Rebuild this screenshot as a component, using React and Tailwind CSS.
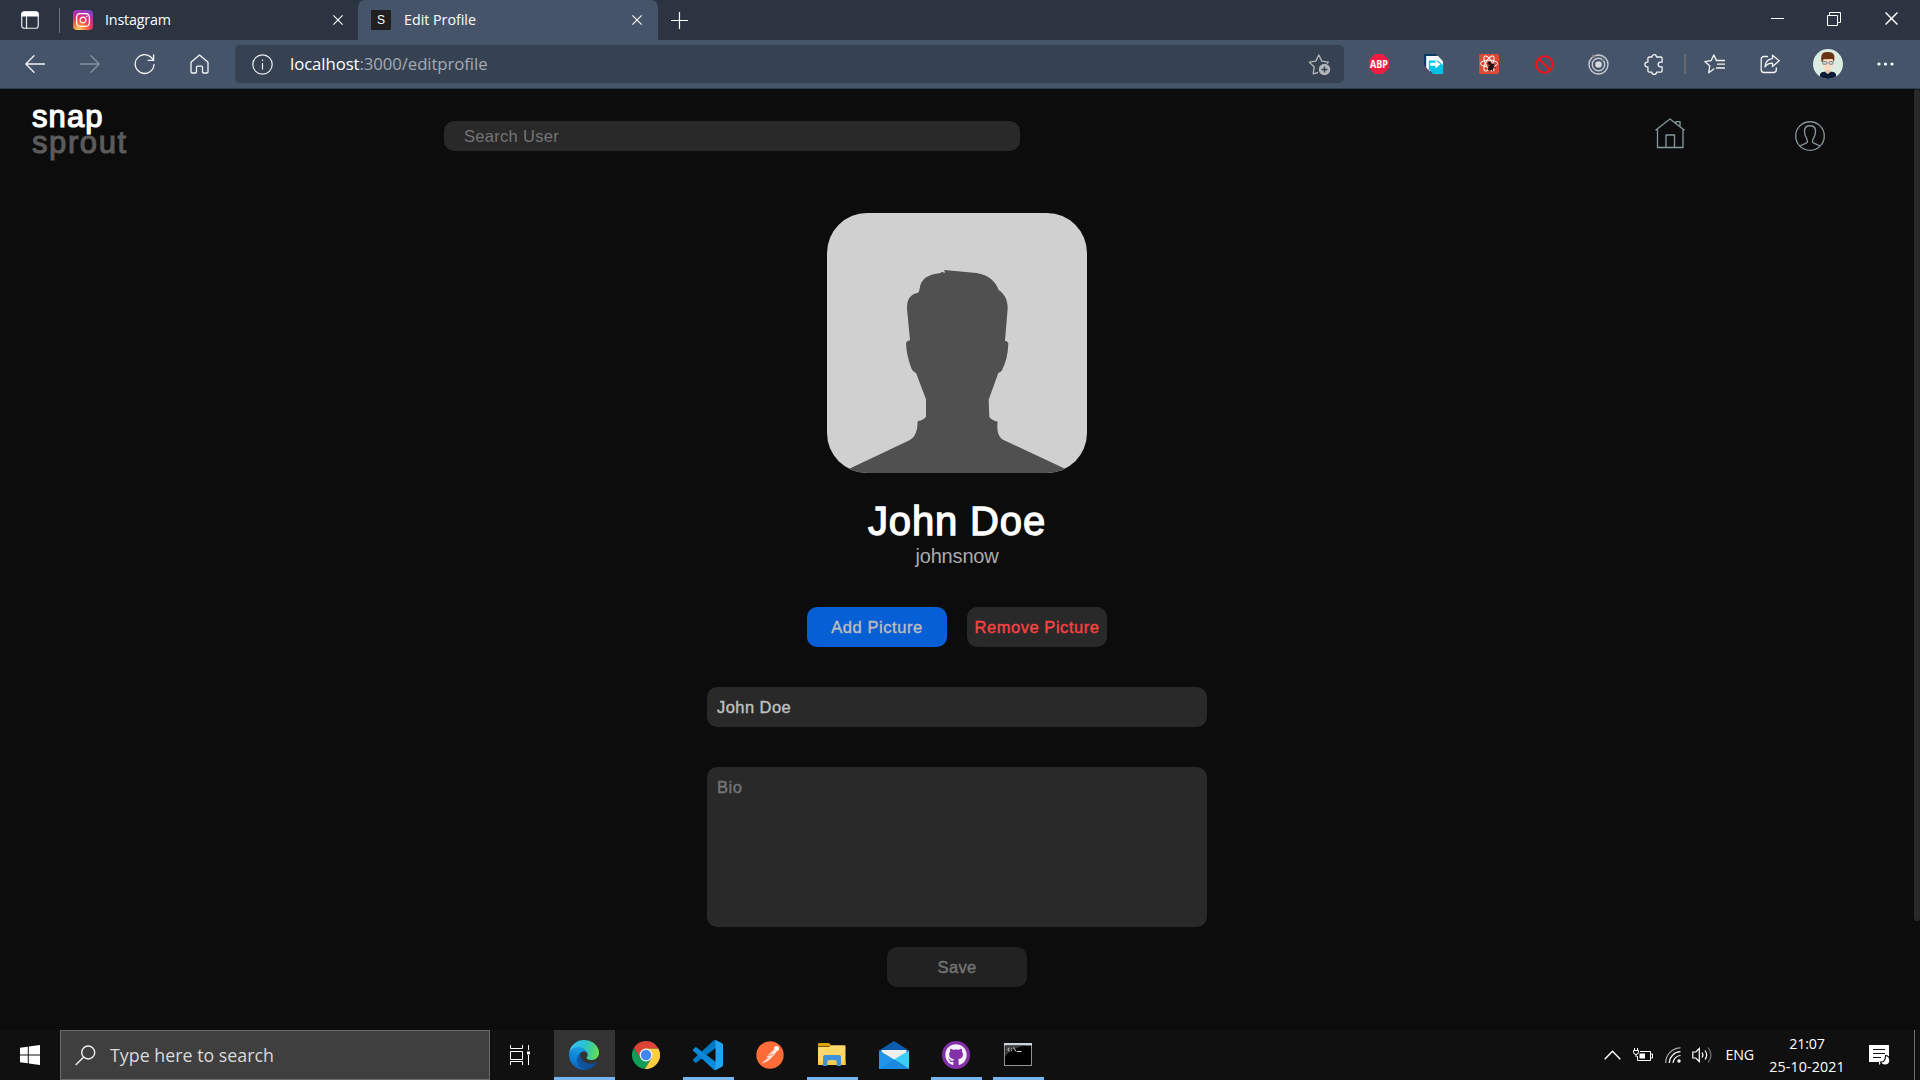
import React from "react";
import { FaInstagram, FaGithub } from "react-icons/fa";

const segoe = "font-['Open_Sans',sans-serif]";
const medium = "[-webkit-text-stroke:0.4px_currentColor]";

function Svg({ w, h, children, className = "", ...rest }) {
  return (
    <svg width={w} height={h} viewBox={`0 0 ${w} ${h}`} fill="none" className={`block shrink-0 ${className}`} {...rest}>
      {children}
    </svg>
  );
}

function CloseIcon({ size = 10 }) {
  return (
    <svg width={size} height={size} viewBox="0 0 10 10" fill="none" stroke="#fff" strokeWidth="1.1" className="block shrink-0">
      <path d="M0.4 0.4 L9.6 9.6 M9.6 0.4 L0.4 9.6" />
    </svg>
  );
}

function TabStrip() {
  return (
    <div className="flex h-10 bg-[#2b3440] text-[14.25px] text-white">
      <div className="flex w-[59px] items-center pl-[21px]">
        <Svg w={18} h={18}>
          <rect x="0.75" y="0.75" width="16.5" height="16.5" rx="2.5" stroke="#e8eaed" strokeWidth="1.2" />
          <path d="M0.5 5.5V3A2.5 2.5 0 0 1 3 .5h12A2.5 2.5 0 0 1 17.5 3v2.5z" fill="#fff" />
          <path d="M5.5 5v12.5" stroke="#e8eaed" strokeWidth="1.2" />
        </Svg>
      </div>
      <div className="mt-2 h-[25px] w-px bg-[#6d747d]" />
      <div className="flex w-[298px] items-center pr-[15px] pl-[13px]">
        <div className="flex size-5 items-center justify-center rounded-[4px] bg-[radial-gradient(circle_at_28%_108%,#fddb6a_5%,#fb7e3c_28%,#f0325a_50%,#b42fb0_74%,#5a4fd0_100%)]">
          <FaInstagram size={16} color="#fff" />
        </div>
        <span className="ml-3 flex-1 tracking-[-0.15px]">Instagram</span>
        <CloseIcon />
      </div>
      <div className="relative flex w-[300px] items-center rounded-t-[7px] bg-[#455469] pr-4 pl-[13px]">
        <div className="flex size-5 items-center justify-center rounded-[1px] bg-[#202020] font-['Liberation_Sans',sans-serif] text-[12px] text-white">S</div>
        <span className="ml-[13px] flex-1">Edit Profile</span>
        <CloseIcon />
      </div>
      <div className="flex flex-1 items-center pl-[13px]">
        <Svg w={17} h={17} stroke="#fff" strokeWidth="1.2">
          <path d="M8.5 0v17M0 8.5h17" />
        </Svg>
      </div>
      <div className="flex h-[37px] w-[172px] items-center">
        <div className="flex w-[57px] justify-center pl-[2px]">
          <div className="h-px w-[13px] bg-white" />
        </div>
        <div className="flex w-[57px] justify-center">
          <Svg w={14} h={14} stroke="#fff" strokeWidth="1">
            <path d="M.5 3.5h10v10h-10zM2.5 3.5v-3h11v10h-3" />
          </Svg>
        </div>
        <div className="flex w-[58px] justify-center">
          <CloseIcon size={13} />
        </div>
      </div>
    </div>
  );
}

function Cell({ children, className = "w-[55px]" }) {
  return <div className={`flex shrink-0 items-center justify-center ${className}`}>{children}</div>;
}

function Toolbar() {
  const line = { stroke: "#f2f4f6", strokeWidth: 1.3, strokeLinejoin: "round", strokeLinecap: "round" };
  return (
    <div className="flex h-[49px] items-center border-b border-[#2f3c4c] bg-[#455469] pl-[7.5px]">
      <Cell>
        <Svg w={20} h={18} {...line}><path d="M19.5 9H.8M9 .7L.8 9 9 17.3" /></Svg>
      </Cell>
      <Cell>
        <Svg w={20} h={18} {...line} stroke="#8893a1"><path d="M.5 9h18.700M11 .7L19.200 9 11 17.300" /></Svg>
      </Cell>
      <Cell>
        <Svg w={21} h={21} {...line} className="-ml-px"><path d="M19.200 6.200A9.400 9.400 0 1 0 20 10.500M19.600 1v5.400h-5.500" /></Svg>
      </Cell>
      <Cell>
        <Svg w={19} h={20} {...line} className="-ml-px">
          <path d="M1 8.300L9.500 1 18 8.300v9.400a1.300 1.300 0 0 1-1.300 1.300h-3.200a1 1 0 0 1-1-1v-4.800a1 1 0 0 0-1-1h-4a1 1 0 0 0-1 1V18a1 1 0 0 1-1 1H2.300A1.300 1.300 0 0 1 1 17.700z" />
        </Svg>
      </Cell>
      <div className="mr-[7.500px] ml-[7.500px] flex h-[38px] w-[1109px] items-center rounded-[5px] bg-[#364152] pr-[13px] pl-[17px]">
        <Svg w={21} h={21} stroke="#eceef0" strokeWidth="1.200">
          <circle cx="10.500" cy="10.500" r="9.700" />
          <path d="M10.500 9v6.500" />
          <circle cx="10.500" cy="6.200" r="0.500" fill="#eceef0" strokeWidth="0.600" />
        </Svg>
        <span className="ml-[17px] flex-1 text-[16.750px] tracking-[-0.080px] text-[#a4abb4]">
          <span className="text-white">localhost</span>:3000/editprofile
        </span>
        <Svg w={23} h={23} stroke="#b4b6b8" strokeWidth="1.300" strokeLinejoin="round">
          <path d="M10 19.500l-4.800 1.300 1-6.800-5-4.900 6.600-1L10.800 2l3 6.100 6.600 1-1.500 1.500" />
          <circle cx="16.500" cy="16.500" r="5.700" fill="#b4b6b8" stroke="none" />
          <path d="M16.500 13.500v6M13.500 16.500h6" stroke="#364152" strokeWidth="1.400" />
        </Svg>
      </div>
      <Cell>
        <svg width="20" height="20" viewBox="0 0 20 20" className="block">
          <path d="M5.900 0h8.200L20 5.900v8.200L14.100 20H5.900L0 14.100V5.900z" fill="#f01d43" />
          <text x="10" y="13.600" textAnchor="middle" fontSize="9.800" fontWeight="700" fill="#fff" fontFamily="Open Sans, sans-serif" textLength="18" lengthAdjust="spacingAndGlyphs">ABP</text>
        </svg>
      </Cell>
      <Cell>
        <Svg w={20} h={20}>
          <path d="M0 0h12.500v3H3v11L0 11z" fill="#063b66" />
          <path d="M2.200 2H14l5 5.500V12H6v5.500l-3.800-4z" fill="#fff" />
          <path d="M4.800 6.500h9.700L19.200 10.500V20H9.200l-4.400-4.500z" fill="#00c3e3" />
          <path d="M14 2.500l5 5v3.500l-5-4.500z" fill="#fff" />
          <path d="M6.200 8.800h5.300V6l5 4.300-5 4.300v-2.800H6.200z" fill="#fff" />
        </Svg>
      </Cell>
      <Cell>
        <Svg w={20} h={20} stroke="#fff" strokeWidth="1">
          <rect width="20" height="20" rx="1.500" fill="#dd4b34" stroke="none" />
          <ellipse cx="10" cy="9.500" rx="8.500" ry="3.300" />
          <ellipse cx="10" cy="9.500" rx="8.500" ry="3.300" transform="rotate(60 10 9.500)" />
          <ellipse cx="10" cy="9.500" rx="8.500" ry="3.300" transform="rotate(120 10 9.500)" />
          <ellipse cx="12.300" cy="13" rx="2.300" ry="4" transform="rotate(38 12.300 13)" fill="#241010" stroke="none" />
          <circle cx="10.500" cy="9.300" r="1.700" fill="#241010" stroke="none" />
          <path d="M8.500 12.500l8 1.500M9 16l6-6M11 10.500l3 7" stroke="#241010" strokeWidth=".9" />
        </Svg>
      </Cell>
      <Cell>
        <Svg w={19} h={19} stroke="#f5121d" strokeWidth="2">
          <circle cx="9.500" cy="9.500" r="8.200" />
          <path d="M3.700 3.700l11.600 11.600" />
        </Svg>
      </Cell>
      <Cell>
        <Svg w={21} h={21} stroke="#c9ccd1" strokeWidth="1.400" className="-ml-px">
          <circle cx="10.500" cy="10.500" r="9.500" />
          <circle cx="10.500" cy="10.500" r="6.200" />
          <circle cx="10.500" cy="10.500" r="3.300" fill="#d8dade" stroke="none" />
          <circle cx="5.800" cy="2.300" r="1.800" fill="#85878b" stroke="none" />
          <circle cx="14.500" cy="6" r="1.500" fill="#85878b" stroke="none" />
        </Svg>
      </Cell>
      <Cell>
        <Svg w={20} h={21} {...line}>
          <path d="M5.200 3h2.700a2.300 2.300 0 0 1 4.600 0h4.300a1.300 1.300 0 0 1 1.300 1.300v3.900h-1.600a2.300 2.300 0 0 0 0 4.600h1.600v4a1.300 1.300 0 0 1-1.300 1.300h-4.200a2.400 2.400 0 0 1-4.800 0H5.200a1.300 1.300 0 0 1-1.300-1.300v-3.900H3.300a2.400 2.400 0 0 1 0-4.800h.6V4.300A1.300 1.300 0 0 1 5.200 3z" />
        </Svg>
      </Cell>
      <div className="mx-[2px] h-5 w-[2px] bg-[#666a70]" />
      <Cell>
        <Svg w={21} h={20} {...line} className="-ml-px">
          <path d="M9.800 15l-5 3.800.9-7L.8 7.600l6.400-1L9.800.9l2.700 5.700M13.500 10.200h7M12.500 14h8M12.500 6.500h8" />
        </Svg>
      </Cell>
      <Cell>
        <Svg w={20} h={20} {...line}>
          <path d="M7.500 2.500H4A2.800 2.800 0 0 0 1.200 5.300v10.400A2.800 2.800 0 0 0 4 18.500h9.500a2.800 2.800 0 0 0 2.800-2.800V14" />
          <path d="M12.500 1.200L19.200 6.800l-6.700 5.700V9.200c-3.500-.2-5.600 1-7.500 3.800.3-4.800 3-8 7.500-8.400z" />
        </Svg>
      </Cell>
      <Cell className="w-[60px]">
        <svg width="30" height="30" viewBox="0 0 30 30" className="block">
          <clipPath id="me"><circle cx="15" cy="15" r="15" /></clipPath>
          <g clipPath="url(#me)">
            <rect width="30" height="30" fill="#dcece3" />
            <path d="M7 30v-4.500q.5-2.500 4.500-2.800h7q4 .3 4.500 2.800V30z" fill="#0d1c36" />
            <path d="M12.500 19h4.500v4.500l-2.200 1.500-2.300-1.500z" fill="#efc7a6" />
            <path d="M9.500 9h10.500v6.500q-1 5.300-5.200 5.600-4.300-.3-5.300-5.600z" fill="#f8dcc3" />
            <path d="M8.500 12.800Q7 4 12 3.300q9.500-1.200 9.500 5.200 0 3-.8 4.500L19.500 10l-9 .3-1 2.800z" fill="#6b3513" />
            <rect x="9.700" y="12.500" width="4.200" height="2.800" rx="1" fill="#c9d0d2" stroke="#555" strokeWidth=".6" />
            <rect x="15.800" y="12.500" width="4.200" height="2.800" rx="1" fill="#c9d0d2" stroke="#555" strokeWidth=".6" />
          </g>
        </svg>
      </Cell>
      <Cell>
        <Svg w={17} h={4}>
          <circle cx="2" cy="2" r="1.600" fill="#fff" />
          <circle cx="8.500" cy="2" r="1.600" fill="#fff" />
          <circle cx="15" cy="2" r="1.600" fill="#fff" />
        </Svg>
      </Cell>
    </div>
  );
}

function PageHeader() {
  return (
    <header className="flex h-[124px] items-start">
      <div className="mt-[15px] w-[444px] pl-8 text-[31px] leading-[26px]">
        <div className="tracking-[1.100px] text-white [-webkit-text-stroke:1.200px_currentColor]">snap</div>
        <div className="tracking-[1.600px] text-[#5b5b5b] [-webkit-text-stroke:1.100px_currentColor]">sprout</div>
      </div>
      <input
        placeholder="Search User"
        className="mt-8 h-[30px] w-[576px] rounded-[10px] bg-[#292929] px-5 text-[16.500px] tracking-[0.300px] text-[#ccc] placeholder:text-[#757575]"
      />
      <div className="mt-[29px] ml-[635px] flex gap-[110px]">
        <Svg w={30} h={31} stroke="#84969a" strokeWidth="1.350" strokeLinejoin="round">
          <path d="M.5 12.200L15 1l14.500 11.200M2.500 10.900v18.600h25.500V10.900M11 29.500V17h8.500v12.500M21 5.300V3.600h4v5.100" />
        </Svg>
        <Svg w={30} h={30} stroke="#84969a" strokeWidth="1.350" className="mt-[3px]">
          <circle cx="15" cy="15" r="14.300" />
          <path d="M5 25.200c1.500-2 7-2.300 7.400-4.200.3-1.700-.2-2.800-1-4-1.200-1.700-1.900-4.500-1.900-7 0-3.700 2-5.300 5.500-5.300s5.500 1.600 5.500 5.300c0 2.500-.7 5.300-1.900 7-.8 1.200-1.300 2.300-1 4 .4 1.900 5.900 2.200 7.400 4.200" />
        </Svg>
      </div>
    </header>
  );
}

function Silhouette() {
  return (
    <svg viewBox="81 39 780 780" className="block size-[260px] rounded-[40px] bg-[#d0d0d0]">
      <path
        fill="#505050"
        d="M148 806L330 720Q353 708 353 664Q374 658 378 650V598L348 519Q338 516 334 505Q319 464 318 430Q319 424 330 421L321 326C321 300 328 284 352 279Q358 276 359 266C362 236 384 223 422 219L424 216L436 218L432 210L530 219C565 224 588 246 596 270C614 282 623 300 623 326L615 422Q624 424 625 430Q624 476 606 511Q604 516 595 519L566 599L568 650Q572 659 593 665Q588 703 606 718L795 806L861 840H81Z"
      />
    </svg>
  );
}

function EditProfile() {
  return (
    <main className="flex flex-col items-center">
      <Silhouette />
      <h1 className="mt-[25px] text-[40px] leading-[46px] tracking-[0.850px] text-white [-webkit-text-stroke:1.300px_currentColor]">John Doe</h1>
      <p className="text-[20px] leading-6 tracking-[-0.180px] text-[#ababab]">johnsnow</p>
      <div className={`mt-[39px] flex gap-5 text-[16.500px] ${medium}`}>
        <button className="h-10 w-[140px] rounded-[10px] bg-[#065fd4] tracking-[0.580px] whitespace-nowrap text-[#bdbdbd]">Add Picture</button>
        <button className="h-10 w-[140px] rounded-[10px] bg-[#292929] tracking-[0.550px] whitespace-nowrap text-[#fa4343]">Remove Picture</button>
      </div>
      <input
        defaultValue="John Doe"
        className={`mt-10 h-10 w-[500px] rounded-[10px] bg-[#292929] px-[10px] text-[16.500px] tracking-[0.450px] text-[#c0c0c0] ${medium}`}
      />
      <textarea
        placeholder="Bio"
        className={`mt-10 block h-40 w-[500px] resize-none rounded-[10px] bg-[#292929] p-[10px] text-[16.500px] leading-5 tracking-[0.600px] text-[#c0c0c0] placeholder:text-[#757575] ${medium}`}
      />
      <button className={`mt-5 h-10 w-[140px] rounded-[10px] bg-[#222] text-[16.500px] tracking-[0.300px] text-[#757575] ${medium}`}>Save</button>
    </main>
  );
}

function EdgeLogo() {
  return (
    <svg width="30" height="30" viewBox="4.600 5 256 256" className="block">
      <defs>
        <linearGradient id="e1" x1="63" y1="177" x2="241" y2="177" gradientUnits="userSpaceOnUse"><stop offset="0" stopColor="#0c59a4" /><stop offset="1" stopColor="#114a8b" /></linearGradient>
        <linearGradient id="e2" x1="100" y1="80" x2="50" y2="240" gradientUnits="userSpaceOnUse"><stop offset="0" stopColor="#1b9de2" /><stop offset=".6" stopColor="#0a7fd6" /><stop offset="1" stopColor="#1062bb" /></linearGradient>
        <linearGradient id="e3" x1="20" y1="60" x2="255" y2="120" gradientUnits="userSpaceOnUse"><stop offset="0" stopColor="#35c1f1" /><stop offset=".45" stopColor="#2bc3d2" /><stop offset=".75" stopColor="#45cf8c" /><stop offset="1" stopColor="#66e04a" /></linearGradient>
      </defs>
      <path fill="url(#e1)" d="M235.680 195.460a93.730 93.730 0 0 1-10.540 4.710 101.870 101.870 0 0 1-35.900 6.460c-47.320 0-88.540-32.550-88.540-74.320A31.480 31.480 0 0 1 117.130 105c-42.800 1.800-53.800 46.400-53.800 72.530 0 73.880 68.090 81.370 82.760 81.370 7.910 0 19.840-2.300 27-4.560l1.310-.44a128.340 128.340 0 0 0 66.600-52.800 4 4 0 0 0-5.320-5.640z" />
      <path fill="url(#e2)" d="M110.340 246.340A79.200 79.200 0 0 1 87.600 225a80.720 80.720 0 0 1 29.530-120c3.120-1.470 8.450-4.130 15.540-4a32.350 32.350 0 0 1 25.690 13 31.880 31.880 0 0 1 6.360 18.660c0-.21 24.460-79.600-80-79.600-43.900 0-80 41.660-80 78.210a130.150 130.150 0 0 0 12.110 56 128 128 0 0 0 156.380 67.110 75.550 75.550 0 0 1-62.780-8z" />
      <path fill="url(#e3)" d="M156.940 153.780c-.81 1.050-3.300 2.500-3.300 5.660 0 2.610 1.700 5.120 4.720 7.230 14.380 10 41.490 8.680 41.560 8.680a59.560 59.560 0 0 0 30.270-8.350A61.380 61.380 0 0 0 260.620 114c.26-22.410-8-37.310-11.340-43.910C228.090 28.760 182.350 5 132.620 5a128 128 0 0 0-128 126.200c.48-36.540 36.800-66.050 80-66.050 3.500 0 23.460.34 42 10.070 16.340 8.580 24.900 18.940 30.850 29.210 6.180 10.670 7.280 24.150 7.280 29.520s-2.740 13.330-7.800 19.830z" />
    </svg>
  );
}

function ChromeLogo() {
  return (
    <svg width="28" height="28" viewBox="0 0 48 48" className="block">
      <path fill="#db4437" d="M24 24V13h21.300A24 24 0 0 0 3.200 12l11.300 17.500z" />
      <path fill="#0f9d58" d="M24 24l-9.500 5.500L3.200 12A24 24 0 0 0 22 48l11.500-18.500z" />
      <path fill="#ffcd40" d="M24 24l9.500 5.500L22 48A24 24 0 0 0 45.300 13H24z" />
      <circle cx="24" cy="24" r="11" fill="#f1f1f1" />
      <circle cx="24" cy="24" r="8.800" fill="#4285f4" />
    </svg>
  );
}

function CodeLogo() {
  return (
    <svg width="30" height="30" viewBox="0 0 100 100" className="block">
      <path fill="#0079c4" d="M96.461 10.796L75.857.876C73.472-.273 70.622.212 68.750 2.083L1.299 63.583c-1.815 1.654-1.813 4.511.004 6.162l5.510 5.009c1.485 1.350 3.722 1.450 5.321.236L93.361 13.370C96.086 11.303 100 13.246 100 16.667v-.24c0-2.400-1.375-4.589-3.539-5.631z" />
      <path fill="#0a8ad9" d="M96.461 89.204L75.857 99.125c-2.385 1.148-5.235.663-7.107-1.208L1.299 36.417c-1.815-1.654-1.813-4.511.004-6.162l5.510-5.009c1.485-1.350 3.722-1.450 5.321-.236L93.361 86.630C96.086 88.697 100 86.754 100 83.333v.24c0 2.400-1.375 4.589-3.539 5.631z" />
      <path fill="#23a4f3" d="M75.858 99.126c-2.386 1.148-5.236.663-7.108-1.209C71.056 100.223 75 98.590 75 95.328V4.672C75 1.410 71.056-.223 68.750 2.083 70.622.211 73.472-.274 75.858.874l20.601 9.907C98.623 11.822 100 14.011 100 16.413v67.174c0 2.402-1.377 4.592-3.541 5.633z" />
    </svg>
  );
}

function PostmanLogo() {
  return (
    <svg width="28" height="28" viewBox="0 0 28 28" className="block">
      <circle cx="14" cy="14" r="13.700" fill="#ff6c37" />
      <circle cx="20.500" cy="7.500" r="2.500" fill="#fff" />
      <path d="M18.500 8.500L12 14.500l-1 3.500-4.500 4 6-2.700 5-5 3-4z" fill="#fde6dc" stroke="#fde6dc" strokeWidth=".8" strokeLinejoin="round" />
      <path d="M12 14.500l5.500-1M11 18l1.500-2" stroke="#ff6c37" strokeWidth=".7" />
    </svg>
  );
}

function FolderLogo() {
  return (
    <svg width="28" height="24" viewBox="0 0 28 24" className="block">
      <path d="M0 1a1 1 0 0 1 1-1h10l3 3.500H0z" fill="#e0a008" />
      <path d="M13 2.300h13.500a1 1 0 0 1 1 1V22H0V4h11z" fill="#ffd868" />
      <path d="M0 18.500h27.500V22H0z" fill="#f9cb4b" />
      <path d="M5 23V14a2 2 0 0 1 2-2h14a2 2 0 0 1 2 2v9h-4.300v-4.200a1.500 1.500 0 0 0-1.500-1.500h-6.400a1.500 1.500 0 0 0-1.500 1.500V23z" fill="#3f92d8" />
    </svg>
  );
}

function MailLogo() {
  return (
    <svg width="30" height="28" viewBox="0 0 30 28" className="block">
      <path d="M0 9.500L15 0l15 9.500v3H0z" fill="#0b5cae" />
      <path d="M2.500 9h25v10h-25z" fill="#efefef" />
      <path d="M0 9.500L15 18.500 0 28z" fill="#2aa4ea" />
      <path d="M30 9.500L15 18.500 30 28z" fill="#3dcdf7" />
      <path d="M0 28V9.500L30 28z" fill="#2196e8" />
      <path d="M0 28L15 18.500l15 9.500z" fill="#1a8ae0" />
    </svg>
  );
}

function TerminalLogo() {
  return (
    <svg width="28" height="23" viewBox="0 0 28 23" className="block">
      <rect x=".5" y=".5" width="27" height="22" fill="#000" stroke="#8d9399" />
      <path d="M0 0h28v2.500H0z" fill="#cdd3da" />
      <path d="M1 2.500h22Q5 5 1.500 14z" fill="#3c3c3c" />
      <path d="M5.500 5a1.500 1.500 0 1 0 0 3M7.500 5.500v.8M7.500 7.300v.8M9.500 4.500l2.500 4M13 8.500h4.500" stroke="#ddd" strokeWidth="1" fill="none" />
    </svg>
  );
}

function Task({ children, line }) {
  return (
    <div className="flex h-full w-[62px] flex-col items-center">
      <div className="flex flex-1 items-center pt-[2px]">{children}</div>
      <div className={`h-[3px] w-[51px] ${line ? "bg-[#76b5ee]" : ""}`} />
    </div>
  );
}

function Taskbar() {
  return (
    <footer className="flex h-[50px] items-center bg-[#101010] text-[14.250px] text-white">
      <div className="flex w-[60px] justify-center">
        <Svg w={20} h={20}>
          <path d="M0 2.800L7.800 1.700V9.500H0zM8.800 1.500L20 0v9.500H8.800zM0 10.500h7.800v7.800L0 17.200zM8.800 10.500H20V20L8.800 18.500z" fill="#fff" />
        </Svg>
      </div>
      <div className="flex h-full w-[430px] items-center border border-[#6a6a6a] bg-[#3f3f3f] pl-[14px]">
        <Svg w={21} h={21} stroke="#f0f0f0" strokeWidth="1.400">
          <circle cx="13.200" cy="7.500" r="6.500" />
          <path d="M8.500 12.200L.7 20" />
        </Svg>
        <span className="ml-[14px] text-[17.800px] tracking-[0.020px] text-[#dadada]">Type here to search</span>
      </div>
      <div className="flex w-16 justify-start pl-5">
        <Svg w={21} h={20} stroke="#fff" strokeWidth="1">
          <path d="M.5 0v3.500h12V0M.5 6.500h12v8H.5zM.5 20v-3.500h12V20M18.500 0v5M18.500 10v10" />
          <rect x="17" y="6.500" width="3" height="3" fill="#fff" stroke="none" />
        </Svg>
      </div>
      <div className="flex h-full w-[61px] flex-col items-center bg-[#333]">
        <div className="flex flex-1 items-center pt-[2px] pr-px"><EdgeLogo /></div>
        <div className="h-[3px] w-full bg-[#76b5ee]" />
      </div>
      <Task><ChromeLogo /></Task>
      <Task line><CodeLogo /></Task>
      <Task><PostmanLogo /></Task>
      <Task line><FolderLogo /></Task>
      <Task><MailLogo /></Task>
      <Task line>
        <div className="flex size-7 items-center justify-center rounded-full bg-[#8430a8]">
          <FaGithub size={22} color="#f4f0f6" />
        </div>
      </Task>
      <Task line><TerminalLogo /></Task>
      <div className="ml-auto flex h-full items-center">
        <Svg w={17} h={10} stroke="#fff" strokeWidth="1.400" className="mr-3"><path d="M.7 9.300L8.500 1.200l7.800 8.100" /></Svg>
        <Svg w={20} h={14} stroke="#fff" strokeWidth="1">
          <path d="M7 3.500h10.500v9H4.500V8M17.500 6h2v4h-2" />
          <rect x="6.500" y="5.500" width="5.500" height="5" fill="#fff" stroke="none" />
          <path d="M1.500 0v2.500M4.500 0v2.500M.5 2.500h5v1.500a2.500 2.500 0 0 1-5 0zM3 6v3" />
        </Svg>
        <Svg w={16} h={16} stroke="#fff" strokeWidth="1.200" className="ml-3">
          <path d="M.7 16A15 15 0 0 1 15.500.8" stroke="#aaa" />
          <path d="M4.300 16A11.500 11.500 0 0 1 15.500 4.700M8 16a8 8 0 0 1 7.500-7.500" />
          <circle cx="14" cy="14" r="1.700" fill="#fff" stroke="none" />
        </Svg>
        <Svg w={21} h={18} stroke="#fff" strokeWidth="1.200" className="ml-[11px]">
          <path d="M.8 6v6h3l3.500 3.500v-13L3.800 6zM10 6.500q1.800 2.500 0 5M13 4.500q3.300 4.500 0 9" />
          <path d="M16 1.500q6 7.500 0 15" stroke="#777" />
        </Svg>
        <span className="ml-[13px] tracking-[-0.200px]">ENG</span>
        <div className="ml-[15px] flex w-[76px] flex-col items-center leading-[23px]">
          <span className="tracking-[-0.200px]">21:07</span>
          <span className="tracking-[0.100px] whitespace-nowrap">25-10-2021</span>
        </div>
        <Svg w={21} h={21} className="ml-6">
          <path d="M0 0h20v17h-7l-3 3v-3H0z" fill="#fff" />
          <path d="M4 4.500h12M4 8.500h12M4 12.500h8" stroke="#101010" strokeWidth="1.100" />
          <path d="M16.500 10.500a4.800 4.800 0 1 1-5 6.500q5 .5 5-6.500z" fill="#fff" stroke="#101010" strokeWidth="1.100" />
        </Svg>
        <div className="ml-6 h-full w-px bg-[#707070]" />
        <div className="w-[5px]" />
      </div>
    </footer>
  );
}

export default function App() {
  return (
    <div className={`flex h-[1080px] w-[1920px] flex-col overflow-hidden bg-[#0c0c0c] ${segoe}`}>
      <TabStrip />
      <Toolbar />
      <div className="flex h-[941px] font-['Liberation_Sans',Arial,sans-serif]">
        <div className="w-[1914px]">
          <PageHeader />
          <EditProfile />
        </div>
        <div className="h-[832px] w-[6px] rounded-full bg-[#292929]" />
      </div>
      <Taskbar />
    </div>
  );
}
